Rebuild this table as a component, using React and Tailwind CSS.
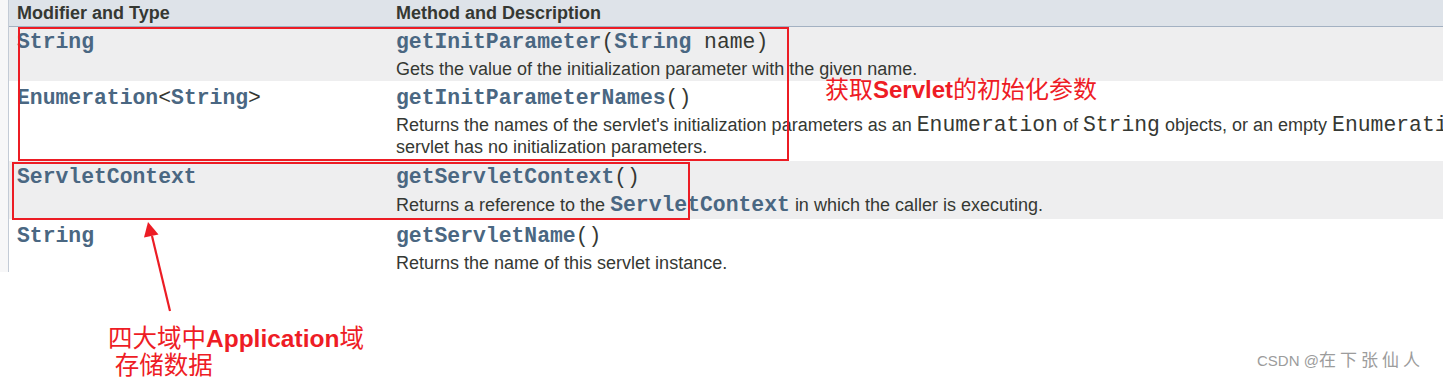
import React from 'react';

const SANS = "font-['Liberation_Sans',Arial,sans-serif]";
const MONO = "font-['Liberation_Mono','Courier_New',monospace]";
const CJK = "font-['Liberation_Sans','Noto_Sans_CJK_SC',sans-serif]";

function Link({ children }) {
  return <span className="font-bold text-[#4a6782]">{children}</span>;
}

function Plain({ children }) {
  return <span className="text-[#353833]">{children}</span>;
}

function Code({ children }) {
  return <span className={`${MONO} text-[21.4px] leading-[0] text-[#353833]`}>{children}</span>;
}

function Row({ shade, height, pad, gap, type, method, children }) {
  return (
    <div className={`flex ${height} ${pad} ${shade ? 'bg-[#eeeeef]' : 'bg-white'}`}>
      <div className="w-[379px] shrink-0 pl-[8px]">
        <div className={`${MONO} text-[21.4px] leading-[26px] whitespace-pre`}>{type}</div>
      </div>
      <div className="flex-1 pl-[8px]">
        <div className={`${MONO} text-[21.4px] leading-[26px] whitespace-pre`}>{method}</div>
        <div className={`${gap} ${SANS} text-[18px] leading-[22px] text-[#353833]`}>{children}</div>
      </div>
    </div>
  );
}

export default function App() {
  return (
    <div className="relative w-[1443px] h-[383px] overflow-hidden bg-white">
      <div className="flex items-start">
        <div className="w-[8px] h-[272px] shrink-0 bg-[#f7f7f8]"></div>
        <div className="w-[1700px] shrink-0 border-l border-[#c3cbd6]">
          {/* header */}
          <div className={`flex h-[27px] bg-[#dee3e9] border-b border-[#a3b1c2] ${SANS} text-[18px] font-bold text-[#353833] leading-[26px]`}>
            <div className="w-[379px] shrink-0 pl-[8px]">Modifier and Type</div>
            <div className="pl-[8px]">Method and Description</div>
          </div>

          <Row
            shade
            height="h-[54px]"
            pad="pt-[2px]"
            gap="mt-[3px]"
            type={<Link>String</Link>}
            method={<><Link>getInitParameter</Link><Plain>(</Plain><Link>String</Link><Plain> name)</Plain></>}
          >
            Gets the value of the initialization parameter with the given name.
          </Row>

          <Row
            height="h-[80px]"
            pad="pt-[4px]"
            gap="mt-[3px]"
            type={<><Link>Enumeration</Link><Plain>&lt;</Plain><Link>String</Link><Plain>&gt;</Plain></>}
            method={<><Link>getInitParameterNames</Link><Plain>()</Plain></>}
          >
            <div className="whitespace-nowrap">
              Returns the names of the servlet's initialization parameters as an <Code>Enumeration</Code> of <Code>String</Code> objects, or an empty <Code>Enumeration</Code> if the
            </div>
            <div>servlet has no initialization parameters.</div>
          </Row>

          <Row
            shade
            height="h-[58px]"
            pad="pt-[3px]"
            gap="mt-[4px]"
            type={<Link>ServletContext</Link>}
            method={<><Link>getServletContext</Link><Plain>()</Plain></>}
          >
            Returns a reference to the{' '}
            <span className={`${MONO} text-[21.4px] leading-[0] font-bold text-[#4a6782]`}>ServletContext</span>{' '}
            in which the caller is executing.
          </Row>

          <Row
            height="h-[53px]"
            pad="pt-[4px]"
            gap="mt-[3px]"
            type={<Link>String</Link>}
            method={<><Link>getServletName</Link><Plain>()</Plain></>}
          >
            Returns the name of this servlet instance.
          </Row>
        </div>
      </div>

      {/* annotation boxes */}
      <div className="absolute left-[18px] top-[27px] w-[771px] h-[134px] border-2 border-[#ec1c24]"></div>
      <div className="absolute left-[12px] top-[162px] w-[678px] h-[58px] border-2 border-[#ec1c24]"></div>

      {/* arrow */}
      <svg className="absolute left-0 top-0 pointer-events-none" width="1443" height="383" viewBox="0 0 1443 383">
        <line x1="170" y1="311" x2="152" y2="236" stroke="#ec1c24" strokeWidth="2.2" />
        <polygon points="148,222 158.5,234.5 144,237.5" fill="#ec1c24" />
      </svg>

      {/* annotation texts */}
      <div className={`absolute left-[825px] top-[75px] ${CJK} text-[24px] leading-[30px] text-[#ee1c25] whitespace-nowrap`}>
        获取<span className="font-bold">Servlet</span>的初始化参数
      </div>
      <div className={`absolute left-[108px] top-[325px] ${CJK} text-[24.5px] leading-[27px] text-[#ee1c25] whitespace-pre`}>
        <div>四大域中<span className="font-bold">Application</span>域</div>
        <div> 存储数据</div>
      </div>

      {/* watermark */}
      <div className={`absolute left-[1257px] top-[350px] ${CJK} text-[15px] leading-[22px] text-[#9c9c9c] whitespace-nowrap`}>
        CSDN @<span className="text-[17px] tracking-[4px]">在下张仙人</span>
      </div>
    </div>
  );
}
